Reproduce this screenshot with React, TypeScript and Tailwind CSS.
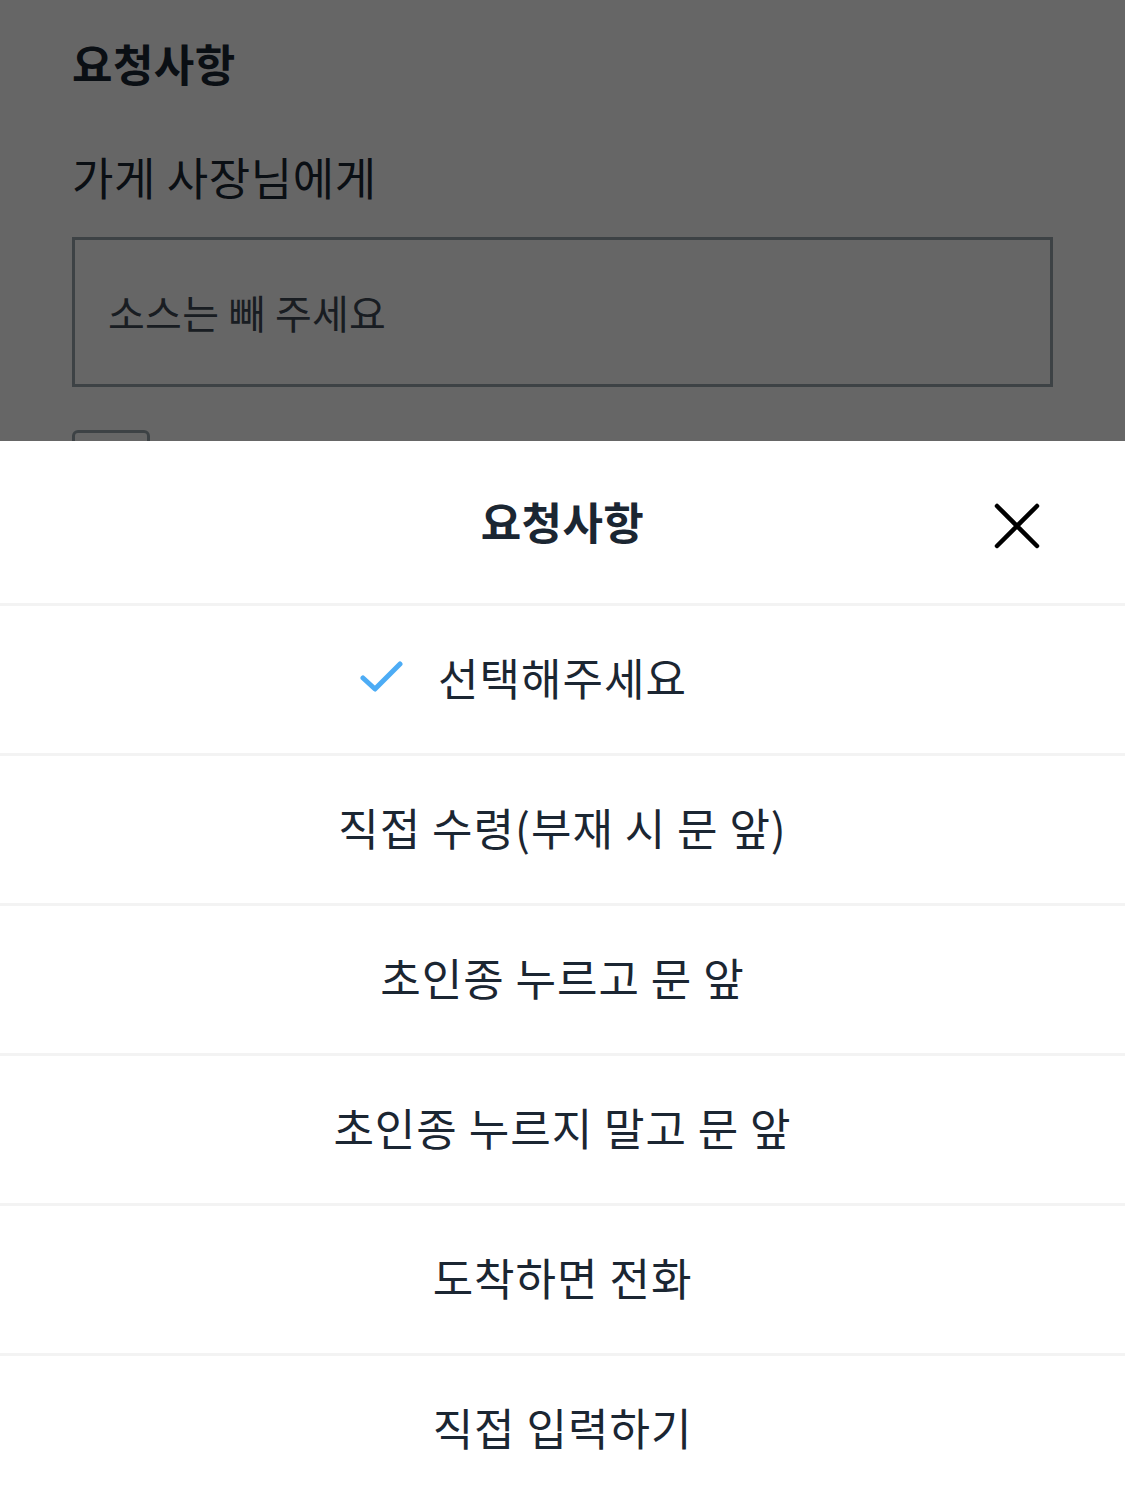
import { useState } from "react";

const OPTIONS = [
  "선택해주세요",
  "직접 수령(부재 시 문 앞)",
  "초인종 누르고 문 앞",
  "초인종 누르지 말고 문 앞",
  "도착하면 전화",
  "직접 입력하기",
];

const font = { fontFamily: '"Noto Sans CJK KR", "Noto Sans", sans-serif' };

function CheckIcon({ className }: { className?: string }) {
  return (
    <svg viewBox="0 0 44 34" className={className} fill="none">
      <path d="M3 18 L15 29 L40 4" stroke="currentColor" strokeWidth="5" strokeLinecap="round" strokeLinejoin="round" />
    </svg>
  );
}

function CloseIcon({ className }: { className?: string }) {
  return (
    <svg viewBox="0 0 46 46" className={className} fill="none">
      <path d="M3 3 L43 43 M43 3 L3 43" stroke="currentColor" strokeWidth="4.5" strokeLinecap="round" />
    </svg>
  );
}

export default function App() {
  const [selected, setSelected] = useState(0);

  return (
    <div className="relative h-[1497px] w-[1125px] overflow-hidden bg-white text-[#1b2632]" style={font}>
      {/* page behind the sheet */}
      <div className="px-[72px] pt-[28px]">
        <h2 className="text-[44px] font-bold leading-[70px] tracking-[0.4px]">요청사항</h2>
        <p className="mt-[49px] text-[45px] leading-[60px] tracking-[0.6px]">가게 사장님에게</p>
        <div className="mt-[30px] flex h-[150px] items-center border-[3px] border-[#9aa6ad] px-[33px]">
          <span className="text-[40px] tracking-[0.3px] text-[#3f4a55]">소스는 빼 주세요</span>
        </div>
        <div className="mt-[43px] h-[78px] w-[78px] rounded-[6px] border-[3px] border-[#9aa6ad]" />
      </div>

      {/* dim overlay */}
      <div className="absolute inset-0 bg-black/60" />

      {/* bottom sheet */}
      <div className="absolute inset-x-0 top-[441px] bg-white">
        <div className="relative flex h-[162px] items-center justify-center pb-[2px]">
          <h3 className="text-[44px] font-bold tracking-[0.4px]">요청사항</h3>
          <button className="absolute right-[85px] top-[62px] text-black">
            <CloseIcon className="h-[46px] w-[46px]" />
          </button>
        </div>
        <ul>
          {OPTIONS.map((opt, i) => (
            <li key={opt} className="border-t-[3px] border-[#f3f3f3]">
              <button
                onClick={() => setSelected(i)}
                className="flex h-[147px] w-full items-center justify-center pb-[6px]"
              >
                <span className="relative text-[44px] tracking-[1px]">
                  {selected === i && (
                    <CheckIcon className="absolute right-full top-1/2 mr-[34px] h-[34px] w-[44px] -translate-y-1/2 text-[#4dacf5]" />
                  )}
                  {opt}
                </span>
              </button>
            </li>
          ))}
        </ul>
      </div>
    </div>
  );
}
